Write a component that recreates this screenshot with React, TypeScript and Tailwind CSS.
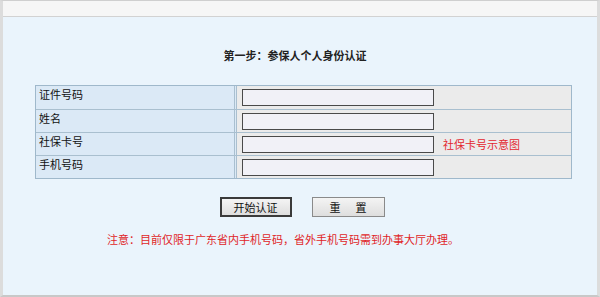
import React from 'react';

// 参保人身份认证表单的行定义
const rows = [
  { label: '证件号码', hint: '' },
  { label: '姓名', hint: '' },
  { label: '社保卡号', hint: '社保卡号示意图' },
  { label: '手机号码', hint: '' },
];

const font = { fontFamily: '"SimSun", "Noto Sans CJK SC", sans-serif' };

const App = () => {
  return (
    <div
      className="h-[297px] w-[600px] overflow-hidden border-x-[3px] border-b-2 border-t border-x-[#dcdcdc] border-b-[#c8c8c8] border-t-[#cfcfcf] bg-[#eaf4fc] text-[11px]"
      style={font}
    >
      {/* 상단 회색 영역 */}
      <div className="h-[16px] border-b border-[#d2d2d2] bg-[#f6f6f6]" />

      <div className="flex flex-col items-center">
        <h2 className="mt-[31px] mr-[10px] text-[11px] font-bold leading-[14px] text-[#222]">
          第一步：参保人个人身份认证
        </h2>

        {/* 입력 테이블 */}
        <div className="mt-[23px] ml-[7px] w-[537px] border border-[#9fb8cb]">
          {rows.map((row, i) => (
            <div
              key={row.label}
              className={`flex h-[23px] ${i > 0 ? 'border-t border-[#a9bfcf]' : ''}`}
            >
              <div className="w-[201px] border-r-[3px] border-double border-[#a9bfcf] bg-[#dbe9f6] pl-[3px] leading-[16px] text-[#111]">
                {row.label}
              </div>
              <div className="flex flex-1 items-center bg-[#ebebeb] pl-[5px]">
                <input
                  type="text"
                  className="h-[17px] w-[192px] border border-[#4a4a4a] bg-[#f1f1f7] outline-none"
                />
                {row.hint && (
                  <span className="ml-[9px] text-[#e3262e]">{row.hint}</span>
                )}
              </div>
            </div>
          ))}
        </div>

        {/* 버튼 영역 */}
        <div className="mt-[18px] ml-[4px] flex gap-[20px]">
          <button
            type="button"
            className="h-[20px] w-[72px] border-2 border-[#3a3a3a] bg-gradient-to-b from-[#f4f4f4] to-[#dedede] leading-[14px] text-[#111]"
          >
            开始认证
          </button>
          <button
            type="button"
            className="h-[20px] w-[73px] border border-[#8a8a8a] bg-gradient-to-b from-[#f4f4f4] to-[#dedede] leading-[16px] text-[#111]"
          >
            重&nbsp;&nbsp;&nbsp;&nbsp;&nbsp;&nbsp;置
          </button>
        </div>

        {/* 안내 문구 */}
        <p className="mt-[15px] mr-[34px] leading-[14px] text-[#e01f28]">
          注意：目前仅限于广东省内手机号码，省外手机号码需到办事大厅办理。
        </p>
      </div>
    </div>
  );
};

export default App;
